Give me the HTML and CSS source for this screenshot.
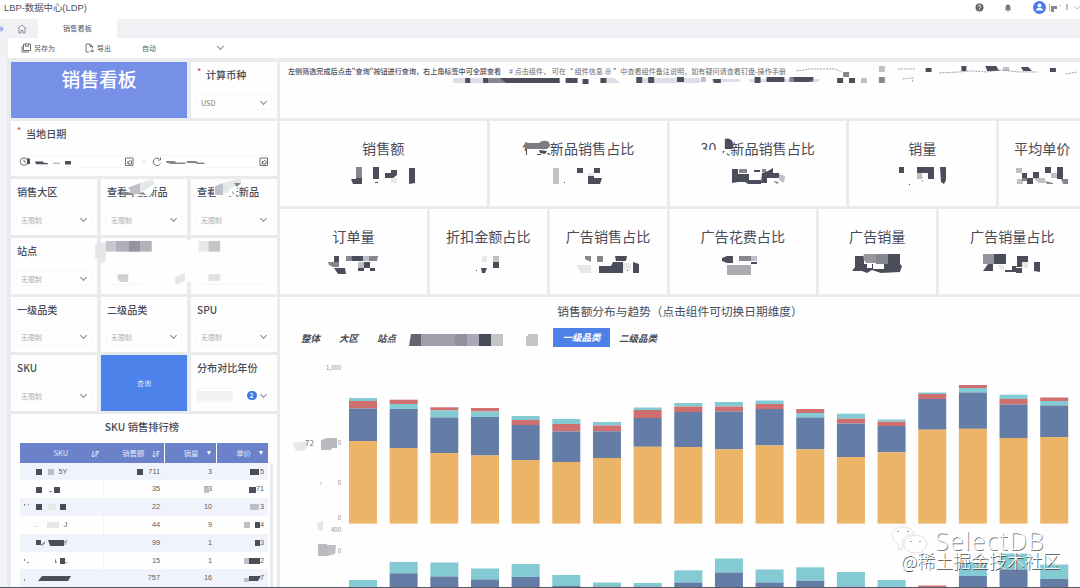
FILE: index.html
```html
<!DOCTYPE html>
<html lang="zh-CN">
<head>
  <meta charset="UTF-8">
  <meta name="viewport" content="width=device-width, initial-scale=1.0">
  <title>LBP-数据中心(LDP)</title>
  <link rel="stylesheet" href="styles.css">
</head>
<body>
  <!-- Top bar -->
  <header class="topbar">
    <span class="brand">LBP-数据中心(LDP)</span>
    <div class="top-icons">
      <svg width="9" height="9" viewBox="0 0 9 9"><circle cx="4.5" cy="4.5" r="4" fill="#63666f"/><path d="M3.2 3.6a1.3 1.3 0 1 1 1.9 1.1q-.6.3-.6.9M4.5 6.4v.7" stroke="#fff" fill="none" stroke-width=".9"/></svg>
      <svg class="bell" width="8" height="8" viewBox="0 0 8 8"><path d="M4 .6a2.4 2.4 0 0 1 2.4 2.4v2l.8 1.2H.8L1.6 5V3A2.4 2.4 0 0 1 4 .6zM3 6.7h2v.8H3z" fill="#777a82"/></svg>
      <svg width="13" height="13" viewBox="0 0 13 13"><circle cx="6.5" cy="6.5" r="6.5" fill="#4c78ee"/><circle cx="6.5" cy="4.6" r="2" fill="#fff"/><path d="M3 9.600q.2-2.800 3.500-2.800T10 9.600z" fill="#fff"/></svg>
      <svg class="user" width="32" height="12" viewBox="1049 2 32 12"><path class="m3" d="M1050 4h1v7h-1z"/><path class="m2" d="M1052 6h6v3h-3v3h-3z"/><path class="m3" d="M1060 5h2v1h-2zM1067 4h2v6h-2z"/><path d="M1075 6l3 3 3-3" stroke="#bbb" fill="none"/></svg>
    </div>
  </header>

  <!-- Tabs -->
  <nav class="tabbar">
    <svg class="expand" width="5" height="8" viewBox="0 0 5 8"><path d="M0 1.5L2.5 4 0 6.5M4 4L2 1.5M4 4L2 6.5" fill="none" stroke="#6d88ee"/></svg>
    <svg class="home" width="10" height="10" viewBox="0 0 10 10"><path d="M.8 4.7L5 1l4.200 3.700M2 4v5h2V6.500h2V9h2V4" fill="none" stroke="#858991" stroke-width=".9"/></svg>
    <div class="tab">销售看板</div>
  </nav>

  <!-- Toolbar -->
  <div class="toolbar">
    <div class="tool save"><svg width="10" height="10" viewBox="0 0 10 10"><path d="M2.500 1h7v6.500h-7zM4.500 1v2.300h3V1M1 3v6h7" fill="none" stroke="#5e6268" stroke-width=".9"/></svg>另存为</div>
    <div class="tool export"><svg width="9" height="10" viewBox="0 0 9 10"><path d="M4 9H1V1h4l2.500 2.500v2M5 1v2.500h2.500M5 8h3.500M7 6.500L8.500 8 7 9.500" fill="none" stroke="#5e6268" stroke-width=".9"/></svg>导出</div>
    <div class="tool auto"><span>自动</span><i class="chev"></i></div>
  </div>

  <main class="board">
    <!-- Filters and ranking -->
    <section class="side">
      <div class="card banner">销售看板</div>
      <div class="card filter">
        <div class="label req">计算币种</div>
        <div class="select usd"><span>USD</span><i class="chev"></i></div>
      </div>
      <div class="card filter dates">
        <div class="label req">当地日期</div>
        <svg class="daterow" width="256" height="14" viewBox="16 154 256 14">
          <path d="M26 155.500h110M160 155.500h110M80 167.500h55M205 167.500h55" stroke="#f3f4f6"/>
          <g fill="none" stroke="#60646b" stroke-width=".9"><circle cx="24" cy="161.500" r="3.800"/><path d="M24 159.300v2.500h2M160.500 163.500a3.800 3.800 0 1 1-1.600-5M160.500 157.500v2.500h-2.500"/><path d="M125.500 158h7.500v7.500h-7.500zM127 163.500l3.500-3.500M128 161v3h3.500v-3.500M260 158h7.500v7.500H260zM261.500 163.500l3.500-3.500M262.500 161v3h3.500v-3.500"/></g>
          <path class="m1" d="M27 158.500h3v5.500h-3zM35 161.500h8v1l5 .8v1H36zM65 161h6v3.500h-6z"/>
          <path class="m3" d="M53 162.500h7v1.500h-7zM143 161.500h2v1h-2z"/>
          <path class="m2" d="M166 161h8l3 1.500h10v-1.500h9l2 1.500h6l1 1.500h-8l-2-1h-10v1h-14l-5-1.500z"/>
        </svg>
      </div>

      <div class="card filter"><div class="label">销售大区</div><div class="select">无限制<i class="chev"></i></div></div>
      <div class="card filter">
        <div class="label">查看年度新品</div><div class="select">无限制<i class="chev"></i></div>
        <svg class="cover" viewBox="101 180 86 56"><path fill="#fff" d="M127 191l12-7 16-4v8l-5 9h-12l-12-3z"/><path class="m3" d="M130 188l10-4v11h-10z"/><path class="m4" d="M140 184l12-4 3 5-15 9z"/><path class="m2" d="M122 193h6l7 3h-13zM138 195l5-2 3 3z"/></svg>
      </div>
      <div class="card filter">
        <div class="label">查看30天新品</div><div class="select">无限制<i class="chev"></i></div>
        <svg class="cover" viewBox="191 180 86 56"><path fill="#fff" d="M214 188l14-6 10 3-2 12h-22z"/><path class="m3" d="M215 187l8-3v12h-8z"/><path class="m4" d="M223 184l18-5v6l-10 4-4 5h-4z"/><path class="m2" d="M234 184h7l-4 4zM232 192l2 2-1 2z"/></svg>
      </div>

      <div class="card filter"><div class="label">站点</div><div class="select">无限制<i class="chev"></i></div></div>
      <div class="card filter joined">
        <svg class="cover wide" viewBox="93 238 184 57">
          <path class="m4" d="M93 244l11-2v19l-7 5v-7h-4zM175 278l10-4v8l-10 4z"/>
          <path fill="#fff" d="M186 240h7v43h-7z"/>
          <path fill="#c6c8cf" d="M104 241h10v11h-10z"/><path fill="#afb0ba" d="M114 241h13v11h-13z"/><path fill="#93949f" d="M127 241h12v11h-12z"/><path fill="#b2b3b9" d="M139 241h12v11h-12z"/>
          <path class="m4" d="M199 241h10v11h-10z"/><path fill="#c4c5c8" d="M209 241h12v11h-12z"/>
          <path fill="#d0d1d5" d="M116 275h11v8h-8l-3-3z"/><path fill="#e0e1e4" d="M209 275h12v7h-12z"/>
          <path d="M107 285.500h35M196 285.500h70" stroke="#f3f4f6"/>
        </svg>
      </div>
      <div class="card filter"></div>

      <div class="card filter"><div class="label">一级品类</div><div class="select">无限制<i class="chev"></i></div></div>
      <div class="card filter"><div class="label">二级品类</div><div class="select">无限制<i class="chev"></i></div></div>
      <div class="card filter"><div class="label">SPU</div><div class="select">无限制<i class="chev"></i></div></div>

      <div class="card filter"><div class="label">SKU</div><div class="select">无限制<i class="chev"></i></div></div>
      <button class="query">查询</button>
      <div class="card filter"><div class="label">分布对比年份</div><div class="select years"><span class="blank"></span><b class="count">2</b><i class="chev"></i></div></div>

      <div class="card ranking">
        <h3>SKU 销售排行榜</h3>
        <table>
          <thead>
            <tr>
              <th class="c1"><span>SKU</span><svg width="8" height="8" viewBox="0 0 8 8"><path d="M2 1v6M.5 5.500L2 7l1.500-1.500M5 7V1.500h2.500L6 4.500" fill="none" stroke="#fff" stroke-width=".8"/></svg></th>
              <th class="c2"><span>销售额</span><svg width="8" height="8" viewBox="0 0 8 8"><path d="M2 1v6M.5 5.500L2 7l1.500-1.500M5 7V1.500h2.500M5 4h2" fill="none" stroke="#fff" stroke-width=".8"/></svg></th>
              <th class="c3"><span>销量</span><i class="down"></i></th>
              <th class="c4"><span>单价</span><i class="down"></i></th>
            </tr>
          </thead>
          <tbody id="rankRows"></tbody>
        </table>
        <svg class="cover rank-marks" viewBox="11 463 266 124">
          <path class="m1" d="M36 470h6v6h-6zM137 470h6v6h-6zM250 470h9v6h-9zM36 488h6v6h-6zM54 488h6v6h-6zM249 488h7v6h-7zM36 505h6v6h-6zM60 505h6v6h-6zM36 541h5v5h-5zM48 541h16v6H50zM255 523h5v6h-5zM255 541h5v6h-5zM60 559h5v6h-5zM249 559h11v6h-11zM42 577h29l-3 5H38zM249 577h12l-3 5h-9z"/>
          <path class="m3" d="M48 470h6v6h-6zM204 488h5v6h-5zM250 505h9v6h-9zM244 523h6v6h-6zM244 559h5v6h-5zM244 579h5v4h-5z"/>
          <path class="m4" d="M48 505h8v6h-8zM47 523h12v6H47zM34 527h5v1h-5z"/>
          <path class="m2" d="M49 492h3v1h-3zM24 505h1v2h-1zM28 505h1v1h-1zM41 546l4-4v2l-3 3zM24 560h1v2h-1zM27 563h2v1h-2zM24 580h1v2h-1zM55 559l2 5h-2z"/>
        </svg>
        <i class="scroll"></i>
      </div>
    </section>

    <!-- Indicators and chart -->
    <section class="content">
      <div class="card note">
        <p><b>左侧筛选完成后点击"查询"按钮进行查询，右上角标签中可全屏查看</b><span># 点击组件， 可在“ 组件信息 ⊕ ”中查看组件备注说明，如有疑问请查看钉盘-操作手册</span></p>
        <svg class="cover" viewBox="280 62 800 56">
          <path fill="#dcdde6" d="M452 78h60v5h-60zM600 78h14l6 5h-20zM640 78h60v5h-60zM712 79h28v3h-28zM750 79h70v3h-70z"/>
          <path class="m2" d="M487 78h24v5h-24zM790 77h24v5h-24z"/>
          <path class="m1" d="M464 78h5v5h-5zM482 78h5v5h-5zM499 78h60v5H505zM565 78h12v5h-12zM582 79h6v5h-6zM600 78h6v5h-6zM636 77h6v6h-6zM648 77h6v6h-6zM677 77h7v5h-7zM713 79h8v4h-7zM755 77h6v6h-6zM767 77h18v5h-18zM794 77h20v3l-5 2h-14zM838 78h6v5h-6zM850 78h6v5h-6zM927 68h6v4h-6zM963 66h5v5h-5zM987 66h11l3 5h-12zM1023 67h7l4 4h-9zM1052 68h6v4h-6z"/>
          <path class="m2" d="M844 72h6v5h-6zM880 77h6v6h-6z"/>
          <path class="m3" d="M862 78h6v5h-6zM880 66h6v6h-6zM1005 67h6v4h-6zM701 77h5v5h-5z"/>
          <path d="M797 71l14-2h25l6 3M899 69h18M904 79l10-1v4M941 73l20-1 12-1 15 1 14-2 18 2h20M1068 74l12-2" stroke="#85888e" fill="none" stroke-dasharray="2 1" stroke-width=".8"/>
        </svg>
      </div>

      <div class="kpis kpis-a">
        <div class="card kpi"><h4>销售额</h4>
          <svg width="66" height="22" viewBox="351 165 66 22"><path class="m2" d="M357 167h6v11h-6z"/><path class="m1" d="M352 179h5v-1h6v6h-9zM374 167h6v12h-6zM376 182h3v1h-3zM386 173h6v-3h6v5l-4 3h-8zM410 168h6v15l-6 1z"/><path class="m4" d="M392 178h6v5h-6z"/></svg>
        </div>
        <div class="card kpi"><h4>年度新品销售占比</h4>
          <svg width="52" height="22" viewBox="552 165 52 22"><path class="m3" d="M553 168h6v16h-6z"/><path class="m1" d="M577 168h6v5h-6zM594 168h6v5h-6zM588 174l6 2v2h8l-2 6h-12zM564 182h1v1h-1z"/><path class="m4" d="M588 173h6v3h-6z"/></svg>
          <svg class="cover" viewBox="490 121 177 85"><path fill="#fff" d="M520 151h6v8h-6zM526 149h25v10h-25z"/><path fill="#7b7d83" d="M525 143h14q4-4 10-1l1 4q-2 4-9 3h-16z"/><path class="m1" d="M526 149h1v6h-1zM539 150l8 1-2 3-5-1zM537 154h4v1h-4zM546 154l5 1-2-2z"/></svg>
        </div>
        <div class="card kpi"><h4>30天新品销售占比</h4>
          <svg width="56" height="22" viewBox="729 165 56 22"><path class="m1" d="M731 169h6v5h11v6h12v4h-13l-3-2h-7l-6 1zM761 173l6-2 5-3v5h6v5h-12v5h-6zM753 170h6v2h-6z"/><path class="m2" d="M738 169h8v4h-8zM761 169h4v3h-4zM772 181l6 1-2 2z"/><path class="m3" d="M778 174l6 2-1 7-5-3z"/></svg>
          <svg class="cover" viewBox="670 121 177 85"><path fill="#fff" d="M700 150h27v9h-27zM717 139h10v11h-10z"/><path class="m1" d="M725 139q5-2 8 3v7h-8zM723 151h2l-2 3z"/></svg>
        </div>
        <div class="card kpi"><h4>销量</h4>
          <svg width="50" height="22" viewBox="902 165 50 22"><path class="m1" d="M904 167h5v6h-5zM922 167h17v12h-6v-6h-11zM926 182l2-2v-2h-1l1-1v4zM945 167h6v13l-2 4-3-2zM914 184h1v1h-1z"/><path class="m3" d="M922 173h5v6h-5z"/></svg>
        </div>
        <div class="card kpi"><h4>平均单价</h4>
          <svg width="54" height="22" viewBox="1016 165 54 22"><path class="m1" d="M1023 173h5v5h-5zM1034 172h6v6h-6zM1028 178h6v6h-6zM1046 167h6v6h-6zM1058 167h6v12h-6z"/><path class="m3" d="M1017 168h6v5h-6zM1018 179h6v5h-6zM1034 178h12v5h-6zM1052 173h6v5h-6z"/><path class="m2" d="M1023 178h5v3h-5zM1046 181l8 2v1h-6zM1062 179h7v5h-5z"/></svg>
        </div>
      </div>

      <div class="kpis kpis-b">
        <div class="card kpi"><h4>订单量</h4>
          <svg width="54" height="22" viewBox="326 253 54 22"><path class="m1" d="M333 256h5v6h-5zM333 268h11l1 6h-8zM351 256h11v5h-11zM363 262h6v6h-6zM357 268h6v3h-6zM369 268h5v3h-5z"/><path class="m2" d="M327 262h11v5h-6l-4-2zM345 256h6v5h-6zM368 256h9l-1 5h-8z"/><path class="m3" d="M362 256h6v5h-6zM357 262h6v6h-6z"/></svg>
        </div>
        <div class="card kpi"><h4>折扣金额占比</h4>
          <svg width="26" height="22" viewBox="475 253 26 22"><path class="m4" d="M482 256h5v6h-5z"/><path class="m3" d="M493 256h6v6h-6z"/><path class="m1" d="M493 262h6v6h-6zM481 268h6l-2 5h-3zM476 270h1v1h-1z"/></svg>
        </div>
        <div class="card kpi"><h4>广告销售占比</h4>
          <svg width="64" height="22" viewBox="573 253 64 22"><path class="m4" d="M573 265h15v8h-10zM620 263h8v7h-8z"/><path class="m2" d="M582 256h6v6l-6-3zM594 256h6v6h-6z"/><path class="m1" d="M612 256h12l-1 5h-10zM596 266h12l2-4h10v11h-24zM630 262l6 2v9h-6zM624 270h1v1h-1z"/></svg>
        </div>
        <div class="card kpi"><h4>广告花费占比</h4>
          <svg width="46" height="22" viewBox="718 253 46 22"><path class="m1" d="M720 258l5-2h6v7h-6l-5-2zM749 262h6v2h-6z"/><path class="m2" d="M737 256h6v5h-6zM743 256h6v5h-6z"/><path class="m3" d="M749 256h6v5h-6z"/><path fill="#aaacb1" d="M725 265h24v10h-24z"/></svg>
        </div>
        <div class="card kpi"><h4>广告销量</h4>
          <svg width="52" height="22" viewBox="852 253 52 22"><path class="m1" d="M856 256h9v8h9v5h7v-5h8v-10h12v10l2 2-2 6-19 1-9-3-5 3-5-2h-10l3-4z"/><path fill="#96979f" d="M865 254h12v9h-10l-3-5z"/><path class="m2" d="M877 254h12v10h-12z"/><path fill="#fff" d="M868 264h5v4h-5zM880 264h5v5h-5z"/></svg>
        </div>
        <div class="card kpi"><h4>广告销量占比</h4>
          <svg width="60" height="22" viewBox="982 253 60 22"><path fill="#9294a0" d="M983 254h11v10h-11z"/><path class="m1" d="M994 254h12v10h-12zM983 271l5-7h5v7zM1017 256h11v6h-6v5h-6v5h-11v-2h7v-4h5zM1016 268h6v5h-6zM1034 262h6v10l-6-1z"/><path class="m4" d="M1022 262h6v6h-6zM998 265h6v5h-3z"/></svg>
        </div>
      </div>

      <div class="card trend">
        <h4>销售额分布与趋势（点击组件可切换日期维度）</h4>
        <div class="dims">
          <span class="dim">整体</span>
          <span class="dim">大区</span>
          <span class="dim">站点</span>
          <svg width="130" height="12" viewBox="408 335 130 12"><path fill="#65656d" d="M411 335h10v12h-12z"/><path fill="#a09fac" d="M421 335h34v12h-34z"/><path fill="#9291a0" d="M455 335h12v12h-12z"/><path fill="#a9a9b8" d="M467 335h12v12h-12z"/><path fill="#484a5a" d="M479 335h12v12h-12z"/><path fill="#c2c4c7" d="M491 335h12v12h-12zM529 335h9v12h-12v-9z"/></svg>
          <span class="dim active">一级品类</span>
          <span class="dim">二级品类</span>
        </div>
        <svg id="chart" class="chart" width="800" height="236" viewBox="280 352 800 236">
          <path class="m4" d="M293 443l14-2v7l-5 3h-6zM317 523l6-2v10l-5-1z"/>
          <text class="side-num" x="305" y="446">72</text>
          <g class="ticks">
            <text x="341" y="370">1,000</text>
            <text x="341" y="445">0</text>
            <text x="341" y="485">0</text>
            <text x="341" y="520">0</text>
            <text x="341" y="532">400</text>
            <text x="341" y="553">0</text>
          </g>
          <path fill="#b9babd" d="M321 440l6-2h10v10h-5l-1 2h-10zM318 544h9v12h-9z"/>
          <path class="m3" d="M327 545h9l-1 9-8 2z"/>
          <path d="M321 482v3" stroke="#aaa" stroke-width=".7"/>
        </svg>
      </div>
    </section>
  </main>

  <div class="mark">
    <svg width="40" height="30" viewBox="0 0 40 30"><path d="M14 21l-5 2 1-5C-3 9 5 0 13 0c8 0 12 4 12 7-8 0-14 6-11 14zM38 17c0-11-23-12-23 0 0 8 9 10 14 8l5 2-1-4q5-2 5-6z"/><path class="eyes" d="M8 5q1-2 2 0M18 5q1-2 2 0M21 15q1-2 2 0M30 15q1-2 2 0"/></svg>
    <span class="mark-en">SelectDB</span>
    <span class="mark-cn">@稀土掘金技术社区</span>
  </div>

  <script>
    const colors = { t: '#83cad2', r: '#cf6f70', b: '#637da6', o: '#ecb466' };

    // [segment, top] pairs for each column, from the top down
    const mainBars = [
      't398 r401 b408.500 o441', 'r399.700 t404 b409 o448', 'r407.300 t410.500 b417.500 o453', 'r408 t411.500 b417 o455.500',
      't416 r420 b425 o460', 't419 r424 b431.500 o462', 't422 r425.500 b431.300 o458', 't407.500 r410 b418 o446.800',
      't403 r406.500 b412 o447', 't402 r406.500 b411.500 o449.300', 't400.500 r404 b409 o445.500', 'r409 t413 b417.500 o449.300',
      't413.700 r418.700 b423.500 o457', 't419.500 r421.700 b426 o452.300', 't392.500 r394 b399 o429.700', 'r385 t388 b392.500 o428.800',
      't394.700 r399 b404.500 o438', 'r397.500 t401 b405.500 o437'
    ];
    const nextBars = [
      't580', 't562 b573.300', 't562.500 b576.500', 't568.500 b579.500', 't564 b577', 't575 b586',
      't582.500 b586.500', 't583 b586.500', 't570.300 b582.500', 't558.500 b572.500', 't569.500 b582.500', 't567.300 b580.800',
      't572 b586.500', 't580', 'r585.500', 't562 b576', 't553.500 b569.500', 't564.500 b579'
    ];

    function drawBars(rows, bottom) {
      let html = '';
      rows.forEach((row, i) => {
        const parts = row.split(' ').map(p => [p[0], parseFloat(p.slice(1))]);
        parts.forEach(([key, top], n) => {
          const end = n + 1 < parts.length ? parts[n + 1][1] : bottom;
          html += `<rect x="${349 + i * 40.66}" y="${top}" width="28" height="${end - top}" fill="${colors[key]}"/>`;
        });
      });
      document.getElementById('chart').insertAdjacentHTML('beforeend', html);
    }
    drawBars(mainBars, 523.6);
    drawBars(nextBars, 588);

    // Ranking rows
    const rank = [
      ['5Y', '711', '3', '5'], ['', '35', '33', '71'], ['', '22', '10', '3'], ['J', '44', '9', '4'],
      ['Y', '99', '1', '3'], ['L', '15', '1', '2'], ['', '757', '16', '7']
    ];
    document.getElementById('rankRows').innerHTML = rank.map(r =>
      '<tr>' + r.map(v => `<td>${v}</td>`).join('') + '</tr>').join('');
  </script>
</body>
</html>
```

FILE: styles.css
```css
* {
  box-sizing: border-box;
}
body {
  margin: 0;
  width: 1080px;
  height: 588px;
  overflow: hidden;
  position: relative;
  background: #eef0f2;
  color: #484b58;
  font-family: "Noto Sans CJK SC", "Noto Sans", sans-serif;
  border-bottom: 1px solid #555a64;
}
h3, h4, p {
  margin: 0;
}
svg {
  display: block;
  flex: none;
}

/* Masked value shades */
.m1 { fill: #4b4d5a; }
.m2 { fill: #85878e; }
.m3 { fill: #bfc0c5; }
.m4 { fill: #e6e7e9; }

/* Top bar */
.topbar {
  height: 19px;
  padding-left: 4px;
  display: flex;
  justify-content: space-between;
  background: #fff;
}
.brand {
  font: 9.400px/15px "Liberation Sans", "Noto Sans CJK SC", sans-serif;
  color: #50535a;
}
.top-icons {
  display: flex;
  align-items: center;
  height: 15px;
}
.bell {
  margin: 0 21px 0 20px;
}
.user {
  margin-left: 2px;
}

/* Tabs and toolbar */
.tabbar {
  height: 19px;
  display: flex;
  align-items: center;
  background: #eff1f5;
}
.expand {
  margin-left: -1px;
}
.home {
  margin: 0 11px 0 13px;
}
.tab {
  width: 79px;
  height: 19px;
  background: #fff;
  font-size: 7.200px;
  line-height: 18px;
  text-align: center;
  color: #53565e;
}
.toolbar {
  height: 20px;
  margin-left: 8px;
  padding-left: 13px;
  display: flex;
  align-items: center;
  background: #fff;
  font-size: 7px;
  color: #555860;
}
.tool {
  display: flex;
  align-items: center;
  gap: 3px;
}
.save { width: 64px; }
.export { width: 57px; }
.auto {
  width: 82px;
  justify-content: space-between;
}
.chev {
  width: 5px;
  height: 5px;
  margin: -3px 1px 0 0;
  border: solid #858990;
  border-width: 0 1px 1px 0;
  transform: rotate(45deg);
}

/* Board */
.board {
  display: flex;
  gap: 3px;
  height: 529px;
  padding: 4px 0 0 11px;
  background: linear-gradient(to right, #f1f3f8 7px, #e9ecee 7px);
}
.card {
  position: relative;
  background: #fefefe;
}
.cover {
  position: absolute;
  left: 0;
  top: 0;
  width: 100%;
  height: 100%;
}

/* Filters */
.side {
  width: 266px;
  display: grid;
  grid-template-columns: 86px 86px 86px;
  grid-template-rows: repeat(6, 55.700px) 1fr;
  gap: 3px 4px;
}
.banner {
  grid-column: span 2;
  background: #7690e8;
  color: #fff;
  font-size: 18.800px;
  font-weight: 500;
  line-height: 34px;
  text-align: center;
}
.label {
  position: relative;
  padding: 5px 0 0 6px;
  font-size: 10.100px;
  font-weight: 500;
  line-height: 15px;
  white-space: nowrap;
}
.req {
  padding-left: 15px;
}
.req::before {
  content: "*";
  position: absolute;
  left: 6px;
  top: 2px;
  font-size: 9px;
  color: #e05656;
}
.select {
  height: 15px;
  margin: 13px 5px 0 5px;
  padding: 0 4px;
  border: 1px solid #f7f8f9;
  display: flex;
  align-items: center;
  justify-content: space-between;
  font-size: 6.900px;
  color: #aaadb2;
}
.usd {
  font-size: 7.200px;
  color: #777a80;
}
.dates {
  grid-column: span 3;
}
.daterow {
  margin: 13px 0 0 5px;
}
.joined {
  z-index: 1;
}
.wide {
  left: -8px;
  width: 184px;
}
.query {
  border: 0;
  padding: 0;
  background: #4d82ea;
  color: #dfe8fb;
  font-family: inherit;
  font-size: 7px;
}
.years {
  padding-left: 0;
}
.blank {
  width: 36px;
  height: 10px;
  background: #f1f2f4;
}
.count {
  width: 10px;
  height: 9px;
  margin-left: 9px;
  border-radius: 5px;
  background: #3f7ae6;
  color: #fff;
  font-size: 6px;
  line-height: 9px;
  text-align: center;
}

/* Ranking table */
.ranking {
  grid-column: span 3;
  overflow: hidden;
}
.ranking h3 {
  padding: 4px 4px 0 0;
  font-size: 10.300px;
  font-weight: 500;
  line-height: 17px;
  text-align: center;
}
.ranking table {
  width: 248px;
  margin: 8px 0 0 9px;
  table-layout: fixed;
  border-collapse: collapse;
}
.ranking th {
  height: 19.500px;
  padding: 0;
  background: #6b81ca;
  color: #e3e8fa;
  font-size: 7.400px;
  font-weight: 400;
  line-height: 10px;
  text-align: right;
  white-space: nowrap;
}
.c1 { width: 83px; }
.c2 { width: 61px; }
.c3, .c4 { width: 52px; }
th.c3, th.c4 {
  border-left: 1px solid #fff;
}
.ranking th svg {
  display: inline-block;
  vertical-align: middle;
  margin: 0 4px 0 7px;
}
.ranking th.c1 svg {
  margin-left: 23px;
}
.down {
  display: inline-block;
  margin: 0 5px 1px 8px;
  border: 2.500px solid transparent;
  border-top: 4px solid #fff;
  border-bottom: 0;
}
.ranking td {
  height: 17.800px;
  padding: 0 4px 0 0;
  font: 7.300px/10px "Liberation Sans", sans-serif;
  text-align: right;
  color: #5b5e68;
}
.ranking td:first-child {
  padding-right: 35px;
  border-right: 1px solid #f1f3f7;
}
.ranking tbody tr:nth-child(odd) {
  background: #f0f3fb;
}
.rank-marks {
  top: 48px;
  height: 124px;
}
.scroll {
  position: absolute;
  right: 4px;
  top: 50px;
  width: 3px;
  height: 130px;
  background: #e8e9ec;
}

/* Right side */
.content {
  flex: 1;
  display: grid;
  grid-template-rows: 55.700px 85px 85px 1fr;
  grid-template-columns: 800px;
  gap: 3px;
}
.note p {
  padding: 3px 0 0 8px;
  font-size: 7.100px;
  line-height: 12px;
  white-space: nowrap;
}
.note b {
  font-weight: 500;
  margin-right: 8px;
}
.note span {
  color: #696c73;
}
.kpis {
  display: grid;
  gap: 3px;
}
.kpis-a {
  grid-template-columns: 206.500px 177px 176.500px 146.500px 1fr;
}
.kpis-b {
  grid-template-columns: 147px 116.500px 117px 146.500px 116.500px 1fr;
}
.kpi {
  display: flex;
  flex-direction: column;
  align-items: center;
  padding-top: 17px;
}
.kpi h4 {
  margin-bottom: 6px;
  font-size: 14.100px;
  font-weight: 400;
  line-height: 21px;
  white-space: nowrap;
}
.kpis-a .kpi:last-child,
.kpis-b .kpi:last-child {
  padding-left: 6px;
}

/* Trend chart */
.trend h4 {
  padding-top: 5px;
  font-size: 11.700px;
  font-weight: 400;
  line-height: 18px;
  text-align: center;
}
.dims {
  height: 20px;
  margin-top: 8px;
  padding-left: 21px;
  display: flex;
  align-items: center;
}
.dim {
  margin-right: 19px;
  font-size: 9.500px;
  font-weight: 700;
  font-style: italic;
}
.dims svg {
  margin: 5px 15px 0 -7px;
}
.active {
  width: 57px;
  height: 19px;
  margin-right: 9px;
  background: #4d80e8;
  color: #fff;
  line-height: 18px;
  text-align: center;
}
.chart {
  margin-top: 4px;
}
.ticks {
  font-size: 6px;
  fill: #8a8d93;
  text-anchor: end;
}
.side-num {
  font-size: 8px;
  fill: #777a80;
}

/* Corner mark */
.mark {
  position: absolute;
  left: 889px;
  top: 527px;
  width: 180px;
  height: 50px;
}
.mark svg {
  overflow: visible;
  fill: rgba(255, 255, 255, 0.8);
  stroke: #d5d6d8;
  stroke-width: 0.7;
}
.mark .eyes {
  fill: none;
  stroke: #777;
}
.mark-en,
.mark-cn {
  position: absolute;
  color: #fff;
  white-space: nowrap;
}
.mark-en {
  left: 46px;
  top: -3px;
  font: 300 25px/32px "Open Sans", sans-serif;
  letter-spacing: 1.200px;
  text-shadow: 0.7px 0.7px 0.5px #777;
}
.mark-cn {
  left: 12px;
  top: 20px;
  font-size: 17.900px;
  font-weight: 300;
  line-height: 26px;
  text-shadow: 0.8px 0.8px 0.5px #444;
}
```
